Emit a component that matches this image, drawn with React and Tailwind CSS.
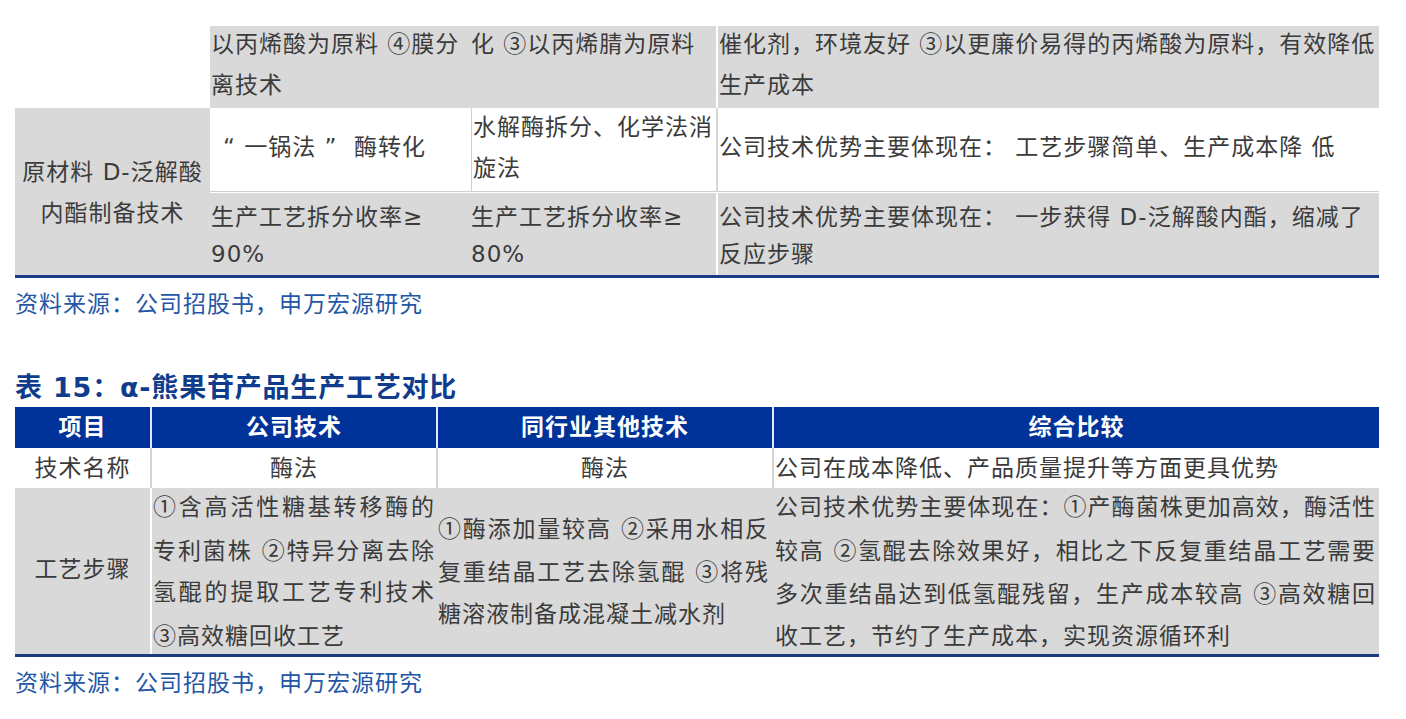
import React from 'react';

const CIRCLED = /([①②③④])/;

// circled digits come from the CJK font, the rest uses DejaVu for latin and Noto CJK for Chinese
const T = ({ s }) =>
  s.split(CIRCLED).map((p, i) =>
    CIRCLED.test(p) ? (
      <span key={i} className="font-['Noto_Sans_CJK_SC',sans-serif]">{p}</span>
    ) : (
      <React.Fragment key={i}>{p}</React.Fragment>
    )
  );

const Lines = ({ lines, justify = 0 }) => (
  <div className="w-full">
    {lines.map((l, i) => (
      <div
        key={i}
        className={`whitespace-nowrap ${i < justify ? 'text-justify [text-align-last:justify] whitespace-normal' : ''}`}
      >
        <T s={l} />
      </div>
    ))}
  </div>
);

const Source = ({ className = '' }) => (
  <p className={`pl-[15px] text-[23px] leading-[30px] tracking-[1px] text-[#2456a6] ${className}`}>
    资料来源：公司招股书，申万宏源研究
  </p>
);

export default function App() {
  return (
    <div className="w-[1406px] h-[719px] overflow-hidden bg-white pt-[26px] font-['DejaVu_Sans','Noto_Sans_CJK_SC',sans-serif] text-[#3b3b3b]">
      {/* table 14, continued from the previous page */}
      <div className="ml-[15px] w-[1364px] grid grid-cols-[195px_261px_245px_663px] grid-rows-[82px_85px_82px] border-b-[3px] border-[#1b3a84] text-[23px] leading-[41px] tracking-[1px]">
        <div className="bg-white" />
        <div className="bg-[#d9d9d9] pl-[1px]">
          <div className="-mt-[4px]"><Lines lines={['以丙烯酸为原料 ④膜分', '离技术']} /></div>
        </div>
        <div className="bg-[#d9d9d9]">
          <div className="-mt-[4px]"><Lines lines={['化 ③以丙烯腈为原料']} /></div>
        </div>
        <div className="bg-[#d9d9d9] border-l-2 border-white pl-[1px]">
          <div className="-mt-[4px]"><Lines lines={['催化剂，环境友好 ③以更廉价易得的丙烯酸为原料，有效降低', '生产成本']} /></div>
        </div>

        <div className="row-span-2 bg-[#d9d9d9] flex items-center justify-center text-center">
          <div className="mt-[2px]">
            <div>原材料 D-泛解酸</div>
            <div>内酯制备技术</div>
          </div>
        </div>
        <div className="bg-white border-b border-[#cfcfcf] mb-px flex items-center pl-[13px] pb-[4px]">
          <span>“&nbsp;一锅法&nbsp;”&nbsp;&nbsp;酶转化</span>
        </div>
        <div className="bg-white border-l border-[#cfcfcf] border-b mb-px flex items-center pl-[1px] pb-[4px]">
          <Lines lines={['水解酶拆分、化学法消', '旋法']} />
        </div>
        <div className="bg-white border-l-2 border-[#d6d6d6] border-b border-b-[#cfcfcf] mb-px flex items-center pl-[1px] pb-[4px]">
          <Lines lines={['公司技术优势主要体现在： 工艺步骤简单、生产成本降 低']} />
        </div>

        <div className="bg-[#d9d9d9] pl-[1px] pt-[6px] leading-[37px]">
          <Lines lines={['生产工艺拆分收率≥', '90%']} />
        </div>
        <div className="bg-[#d9d9d9] pt-[6px] leading-[37px]">
          <Lines lines={['生产工艺拆分收率≥', '80%']} />
        </div>
        <div className="bg-[#d9d9d9] border-l-2 border-white pl-[1px] pt-[6px] leading-[37px]">
          <Lines lines={['公司技术优势主要体现在： 一步获得 D-泛解酸内酯，缩减了', '反应步骤']} />
        </div>
      </div>

      <Source className="mt-[11px]" />

      <h2 className="mt-[52px] mb-[2px] pl-[15px] text-[27px] leading-[34px] font-bold tracking-[0.8px] text-[#0f3c8c]">
        表 15：α-熊果苷产品生产工艺对比
      </h2>

      {/* table 15 */}
      <div className="ml-[15px] w-[1364px] grid grid-cols-[135px_286px_336px_607px] grid-rows-[41px_40px_166px] border-b-[3px] border-[#1b3a84] text-[23px] tracking-[1px]">
        <div className="bg-[#003399] text-white font-bold flex items-center justify-center">项目</div>
        <div className="bg-[#003399] text-white font-bold flex items-center justify-center border-l-2 border-[#e3e6ee]">公司技术</div>
        <div className="bg-[#003399] text-white font-bold flex items-center justify-center border-l-2 border-[#e3e6ee]">同行业其他技术</div>
        <div className="bg-[#003399] text-white font-bold flex items-center justify-center border-l-2 border-[#e3e6ee]">综合比较</div>

        <div className="bg-white flex items-center justify-center">技术名称</div>
        <div className="bg-white flex items-center justify-center border-l-2 border-[#d4d4d4]">酶法</div>
        <div className="bg-white flex items-center justify-center border-l-2 border-[#d4d4d4]">酶法</div>
        <div className="bg-white flex items-center border-l-2 border-[#d4d4d4] pl-[1px]">公司在成本降低、产品质量提升等方面更具优势</div>

        <div className="bg-[#d9d9d9] flex items-center justify-center leading-[41.5px] pb-[3px]">工艺步骤</div>
        <div className="bg-[#d9d9d9] border-l-2 border-white flex items-center leading-[41.5px] pl-[1px] pr-[1px]">
          <Lines
            justify={3}
            lines={['①含高活性糖基转移酶的', '专利菌株 ②特异分离去除', '氢醌的提取工艺专利技术', '③高效糖回收工艺']}
          />
        </div>
        <div className="bg-[#d9d9d9] border-l-2 border-[#d9d9d9] flex items-center leading-[41.5px] pr-[3px]">
          <Lines
            justify={2}
            lines={['①酶添加量较高 ②采用水相反', '复重结晶工艺去除氢醌 ③将残', '糖溶液制备成混凝土减水剂']}
          />
        </div>
        <div className="bg-[#d9d9d9] border-l-2 border-[#d9d9d9] flex items-center leading-[41.5px] pl-[1px] pr-[3px]">
          <Lines
            justify={3}
            lines={[
              '公司技术优势主要体现在：①产酶菌株更加高效，酶活性',
              '较高 ②氢醌去除效果好，相比之下反复重结晶工艺需要',
              '多次重结晶达到低氢醌残留，生产成本较高 ③高效糖回',
              '收工艺，节约了生产成本，实现资源循环利',
            ]}
          />
        </div>
      </div>

      <Source className="mt-[11px]" />
    </div>
  );
}
